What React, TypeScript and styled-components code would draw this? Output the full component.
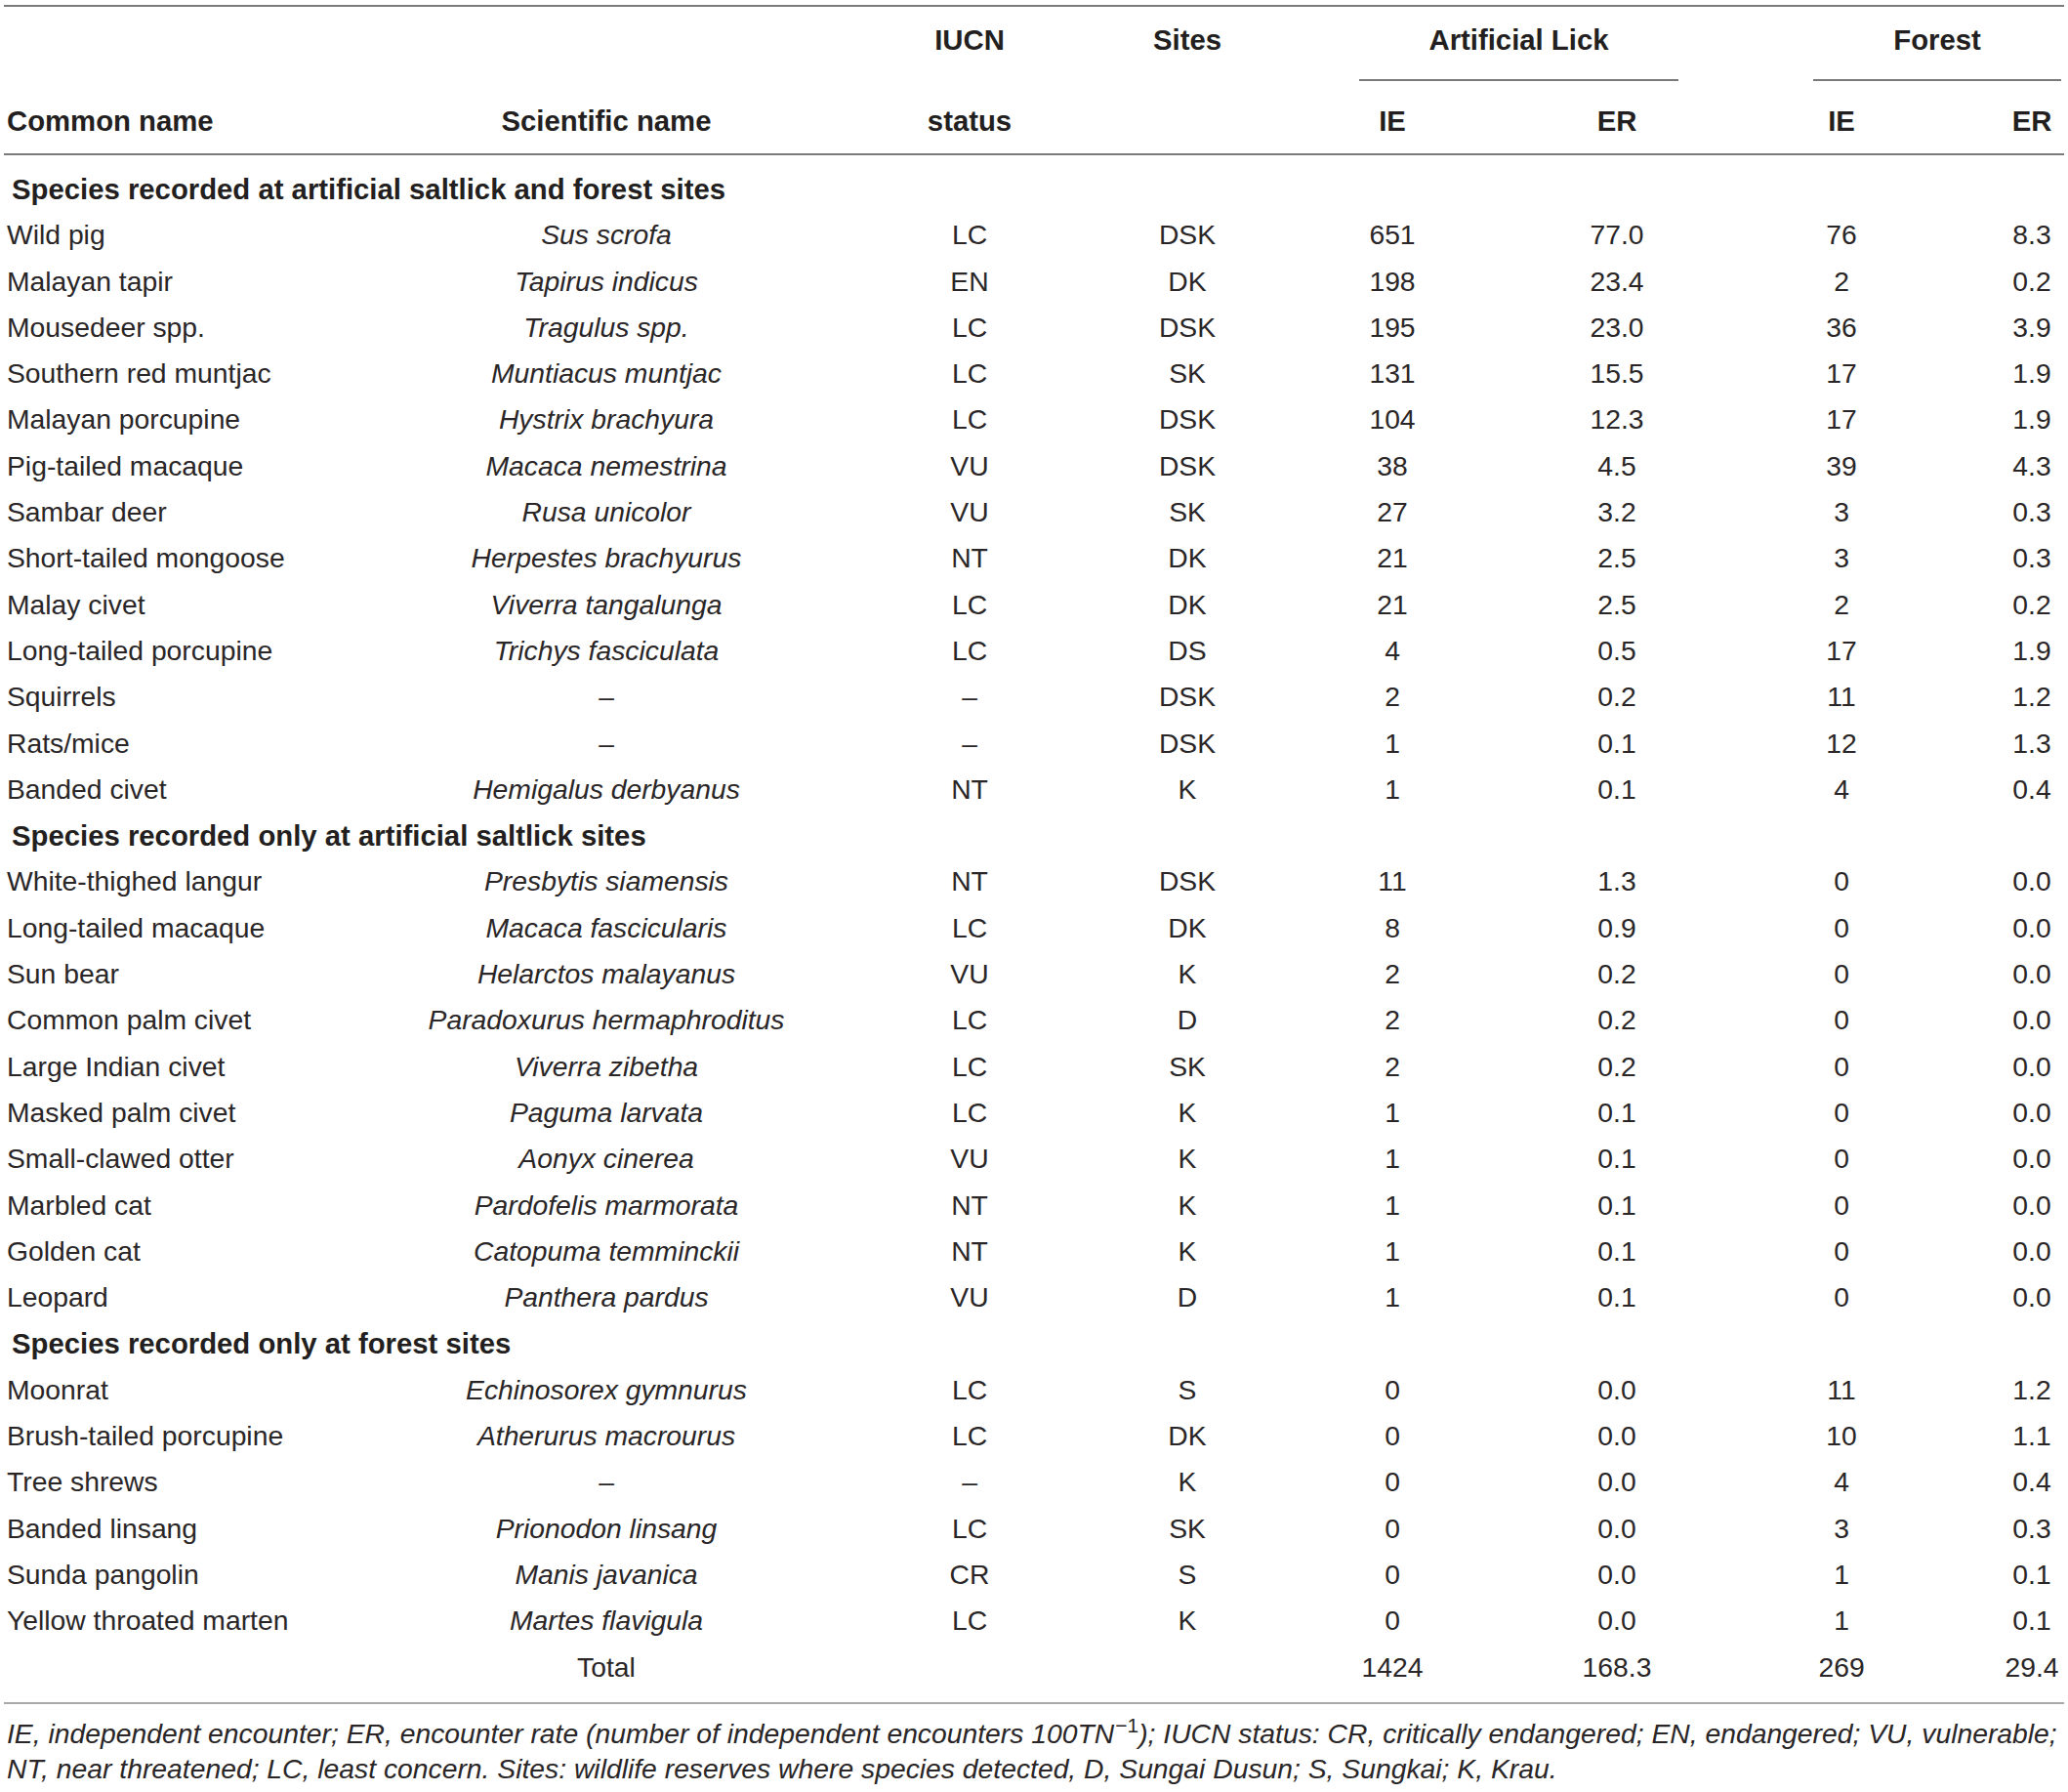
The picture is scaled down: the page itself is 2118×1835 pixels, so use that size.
import React from 'react';
import styled, { createGlobalStyle } from 'styled-components';

type Row = [string, string, string, string, string, string, string, string];

interface ISection {
  title: string;
  rows: Row[];
}

const SECTIONS: ISection[] = [
  {
    title: 'Species recorded at artificial saltlick and forest sites',
    rows: [
      ['Wild pig', 'Sus scrofa', 'LC', 'DSK', '651', '77.0', '76', '8.3'],
      ['Malayan tapir', 'Tapirus indicus', 'EN', 'DK', '198', '23.4', '2', '0.2'],
      ['Mousedeer spp.', 'Tragulus spp.', 'LC', 'DSK', '195', '23.0', '36', '3.9'],
      ['Southern red muntjac', 'Muntiacus muntjac', 'LC', 'SK', '131', '15.5', '17', '1.9'],
      ['Malayan porcupine', 'Hystrix brachyura', 'LC', 'DSK', '104', '12.3', '17', '1.9'],
      ['Pig-tailed macaque', 'Macaca nemestrina', 'VU', 'DSK', '38', '4.5', '39', '4.3'],
      ['Sambar deer', 'Rusa unicolor', 'VU', 'SK', '27', '3.2', '3', '0.3'],
      ['Short-tailed mongoose', 'Herpestes brachyurus', 'NT', 'DK', '21', '2.5', '3', '0.3'],
      ['Malay civet', 'Viverra tangalunga', 'LC', 'DK', '21', '2.5', '2', '0.2'],
      ['Long-tailed porcupine', 'Trichys fasciculata', 'LC', 'DS', '4', '0.5', '17', '1.9'],
      ['Squirrels', '–', '–', 'DSK', '2', '0.2', '11', '1.2'],
      ['Rats/mice', '–', '–', 'DSK', '1', '0.1', '12', '1.3'],
      ['Banded civet', 'Hemigalus derbyanus', 'NT', 'K', '1', '0.1', '4', '0.4'],
    ],
  },
  {
    title: 'Species recorded only at artificial saltlick sites',
    rows: [
      ['White-thighed langur', 'Presbytis siamensis', 'NT', 'DSK', '11', '1.3', '0', '0.0'],
      ['Long-tailed macaque', 'Macaca fascicularis', 'LC', 'DK', '8', '0.9', '0', '0.0'],
      ['Sun bear', 'Helarctos malayanus', 'VU', 'K', '2', '0.2', '0', '0.0'],
      ['Common palm civet', 'Paradoxurus hermaphroditus', 'LC', 'D', '2', '0.2', '0', '0.0'],
      ['Large Indian civet', 'Viverra zibetha', 'LC', 'SK', '2', '0.2', '0', '0.0'],
      ['Masked palm civet', 'Paguma larvata', 'LC', 'K', '1', '0.1', '0', '0.0'],
      ['Small-clawed otter', 'Aonyx cinerea', 'VU', 'K', '1', '0.1', '0', '0.0'],
      ['Marbled cat', 'Pardofelis marmorata', 'NT', 'K', '1', '0.1', '0', '0.0'],
      ['Golden cat', 'Catopuma temminckii', 'NT', 'K', '1', '0.1', '0', '0.0'],
      ['Leopard', 'Panthera pardus', 'VU', 'D', '1', '0.1', '0', '0.0'],
    ],
  },
  {
    title: 'Species recorded only at forest sites',
    rows: [
      ['Moonrat', 'Echinosorex gymnurus', 'LC', 'S', '0', '0.0', '11', '1.2'],
      ['Brush-tailed porcupine', 'Atherurus macrourus', 'LC', 'DK', '0', '0.0', '10', '1.1'],
      ['Tree shrews', '–', '–', 'K', '0', '0.0', '4', '0.4'],
      ['Banded linsang', 'Prionodon linsang', 'LC', 'SK', '0', '0.0', '3', '0.3'],
      ['Sunda pangolin', 'Manis javanica', 'CR', 'S', '0', '0.0', '1', '0.1'],
      ['Yellow throated marten', 'Martes flavigula', 'LC', 'K', '0', '0.0', '1', '0.1'],
    ],
  },
];

const COL_WIDTHS = [420, 394, 350, 96, 324, 136, 324, 66];

// Styled
const GlobalStyle = createGlobalStyle`
  body {
    margin: 0;
    background: #fff;
    color: #231f20;
    font-family: 'Liberation Sans', Arial, sans-serif;
  }
`;

const Page = styled.div`
  padding: 5px 4px 0 4px;
  width: 2110px;
`;

const Table = styled.table`
  width: 2110px;
  table-layout: fixed;
  border-collapse: separate;
  border-spacing: 0;
  font-size: 28.3px;
`;

const HeadCell = styled.th<{ $row: 1 | 2; $align?: 'left' | 'center' }>`
  padding: ${({ $row }) => ($row === 1 ? '17px 0 24px' : '24px 0 16px')};
  line-height: 34px;
  font-size: 29.3px;
  font-weight: 700;
  text-align: ${({ $align }) => $align || 'center'};
  vertical-align: top;
  white-space: nowrap;
  border-top: ${({ $row }) => ($row === 1 ? '2px solid #7a7a7a' : 'none')};
  border-bottom: ${({ $row }) => ($row === 2 ? '2px solid #7a7a7a' : 'none')};

  &.first {
    padding-left: 3px;
  }
`;

const GroupCell = styled.th`
  padding: 0;
  vertical-align: top;
  border-top: 2px solid #7a7a7a;
`;

const GroupLabel = styled.div<{ $inset: number; $end: number }>`
  margin-left: ${({ $inset }) => $inset}px;
  margin-right: ${({ $end }) => $end}px;
  padding: 17px 0 23px;
  line-height: 34px;
  font-size: 29.3px;
  font-weight: 700;
  text-align: center;
  border-bottom: 2px solid #7a7a7a;
`;

const SectionCell = styled.td<{ $first?: boolean }>`
  padding: ${({ $first }) => ($first ? '11px 0 0 8px' : '0 0 0 8px')};
  line-height: 47.3px;
  font-size: 29.3px;
  font-weight: 700;
  white-space: nowrap;
`;

const Cell = styled.td<{ $italic?: boolean; $left?: boolean; $last?: boolean }>`
  padding: ${({ $left }) => ($left ? '0 0 0 3px' : '0')};
  padding-bottom: ${({ $last }) => ($last ? '12px' : '0')};
  line-height: 47.3px;
  font-weight: 400;
  color: #2a2627;
  font-style: ${({ $italic }) => ($italic ? 'italic' : 'normal')};
  text-align: ${({ $left }) => ($left ? 'left' : 'center')};
  white-space: nowrap;
  border-bottom: ${({ $last }) => ($last ? '2px solid #a8a8a8' : 'none')};
`;

const Footnote = styled.p`
  margin: 12px 0 0;
  padding-left: 3px;
  font-size: 28.3px;
  line-height: 36px;
  font-style: italic;
  color: #2a2627;
  white-space: nowrap;

  sup {
    font-size: 21px;
    font-style: normal;
    line-height: 0;
    vertical-align: 11px;
    margin-left: 1px;
  }
`;

const SpeciesRow = ({ row }: { row: Row }) => (
  <tr>
    <Cell $left>{row[0]}</Cell>
    <Cell $italic={row[1] !== '–'}>{row[1]}</Cell>
    {row.slice(2).map((v, i) => (
      <Cell key={i}>{v}</Cell>
    ))}
  </tr>
);

const App = () => {
  return (
    <>
      <GlobalStyle />
      <Page>
        <Table>
          <colgroup>
            {COL_WIDTHS.map((w, i) => (
              <col key={i} style={{ width: w }} />
            ))}
          </colgroup>
          <thead>
            <tr>
              <HeadCell $row={1} />
              <HeadCell $row={1} />
              <HeadCell $row={1}>IUCN</HeadCell>
              <HeadCell $row={1}>Sites</HeadCell>
              <GroupCell colSpan={2}>
                <GroupLabel $inset={128} $end={5}>
                  Artificial Lick
                </GroupLabel>
              </GroupCell>
              <GroupCell colSpan={2}>
                <GroupLabel $inset={133} $end={3}>
                  Forest
                </GroupLabel>
              </GroupCell>
            </tr>
            <tr>
              <HeadCell $row={2} $align='left' className='first'>
                Common name
              </HeadCell>
              <HeadCell $row={2}>Scientific name</HeadCell>
              <HeadCell $row={2}>status</HeadCell>
              <HeadCell $row={2} />
              <HeadCell $row={2}>IE</HeadCell>
              <HeadCell $row={2}>ER</HeadCell>
              <HeadCell $row={2}>IE</HeadCell>
              <HeadCell $row={2}>ER</HeadCell>
            </tr>
          </thead>
          <tbody>
            {SECTIONS.map((section, si) => (
              <React.Fragment key={section.title}>
                <tr>
                  <SectionCell colSpan={8} $first={si === 0}>
                    {section.title}
                  </SectionCell>
                </tr>
                {section.rows.map((row) => (
                  <SpeciesRow key={row[0]} row={row} />
                ))}
              </React.Fragment>
            ))}
            <tr>
              <Cell $last />
              <Cell $last>Total</Cell>
              <Cell $last />
              <Cell $last />
              <Cell $last>1424</Cell>
              <Cell $last>168.3</Cell>
              <Cell $last>269</Cell>
              <Cell $last>29.4</Cell>
            </tr>
          </tbody>
        </Table>
        <Footnote>
          IE, independent encounter; ER, encounter rate (number of independent encounters 100TN
          <sup>−1</sup>); IUCN status: CR, critically endangered; EN, endangered; VU, vulnerable;
          <br />
          NT, near threatened; LC, least concern. Sites: wildlife reserves where species detected, D,
          Sungai Dusun; S, Sungkai; K, Krau.
        </Footnote>
      </Page>
    </>
  );
};

export default App;
